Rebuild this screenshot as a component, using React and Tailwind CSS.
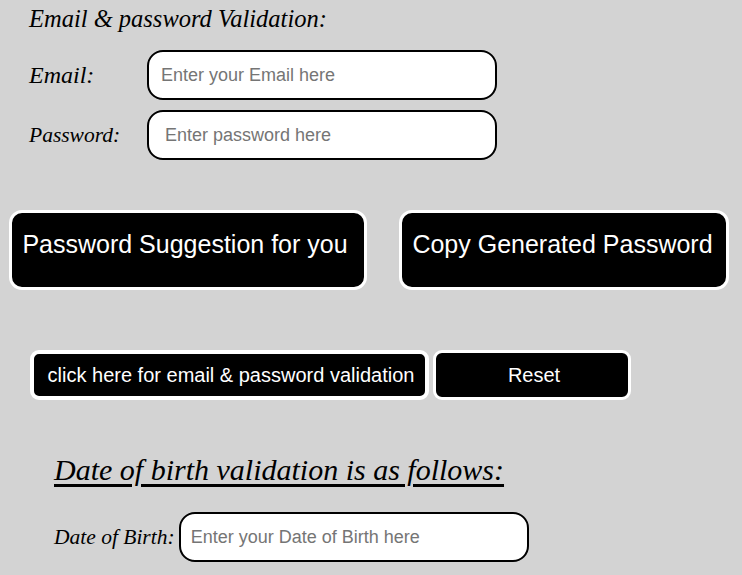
import React from "react";

const serif = "font-['Liberation_Serif',serif] italic";
const arial = "font-['Liberation_Sans',Arial,sans-serif]";

export default function App() {
  return (
    <div className="min-h-[575px] bg-[#d3d3d3] text-black">
      <div className="pl-[29px] pt-[4px]">
        <h1 className={`${serif} text-[24.5px] leading-[30px] font-normal`}>
          Email &amp; password Validation:
        </h1>
        <div className="mt-[16px] flex items-center">
          <label className={`${serif} text-[24px] w-[118px] shrink-0`}>Email:</label>
          <input
            type="text"
            placeholder="Enter your Email here"
            className={`${arial} w-[350px] h-[50px] rounded-[16px] border-2 border-black bg-white pl-[12px] text-[18px] placeholder:text-[#757575] outline-none`}
          />
        </div>
        <div className="mt-[10px] flex items-center">
          <label className={`${serif} text-[21.5px] w-[118px] shrink-0`}>Password:</label>
          <input
            type="password"
            placeholder="Enter password here"
            className={`${arial} w-[350px] h-[50px] rounded-[16px] border-2 border-black bg-white pl-[16px] text-[18px] placeholder:text-[#757575] outline-none`}
          />
        </div>
      </div>

      <div className="mt-[50px] ml-[9px] flex gap-[32px]">
        <button
          className={`${arial} w-[358px] h-[80px] rounded-[13px] border-[3px] border-white bg-black text-white text-[25px] flex items-center justify-center pb-[10px] pr-[6px]`}
        >
          Password Suggestion for you
        </button>
        <button
          className={`${arial} w-[330px] h-[80px] rounded-[13px] border-[3px] border-white bg-black text-white text-[25px] flex items-center justify-center pb-[10px] pr-[3px]`}
        >
          Copy Generated Password
        </button>
      </div>

      <div className="mt-[60px] ml-[30px] flex gap-[4px]">
        <button
          className={`${arial} w-[399px] h-[50px] rounded-[9px] border-[4px] border-white bg-black text-white text-[20px] flex items-center justify-center pl-[3px]`}
        >
          click here for email &amp; password validation
        </button>
        <button
          className={`${arial} w-[198px] h-[50px] rounded-[9px] border-[3px] border-white bg-black text-white text-[20px] flex items-center justify-center pl-[4px]`}
        >
          Reset
        </button>
      </div>

      <div className="pl-[54px]">
        <h2 className={`${serif} mt-[52px] text-[30px] leading-[36px] font-normal underline underline-offset-[4px]`}>
          Date of birth validation is as follows:
        </h2>
        <div className="mt-[24px] flex items-center">
          <label className={`${serif} text-[21.5px] mr-[4px]`}>Date of Birth:</label>
          <input
            type="text"
            placeholder="Enter your Date of Birth here"
            className={`${arial} w-[350px] h-[50px] rounded-[16px] border-2 border-black bg-white pl-[10px] text-[18px] placeholder:text-[#757575] outline-none`}
          />
        </div>
      </div>
    </div>
  );
}
